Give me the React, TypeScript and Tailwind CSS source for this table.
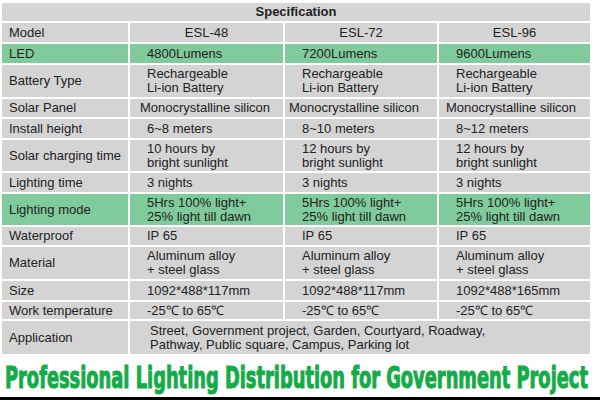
import React from "react";

type Row = {
  label: string;
  values: string[][];
  h: number;
  green?: boolean;
  pads?: number[];
};

const rows: Row[] = [
  { label: "LED", values: [["4800Lumens"], ["7200Lumens"], ["9600Lumens"]], h: 19, green: true },
  {
    label: "Battery Type",
    values: [
      ["Rechargeable", "Li-ion Battery"],
      ["Rechargeable", "Li-ion Battery"],
      ["Rechargeable", "Li-ion Battery"],
    ],
    h: 32,
  },
  {
    label: "Solar Panel",
    values: [["Monocrystalline silicon"], ["Monocrystalline silicon"], ["Monocrystalline silicon"]],
    h: 18,
    pads: [10, 4, 7],
  },
  { label: "Install height", values: [["6~8 meters"], ["8~10 meters"], ["8~12 meters"]], h: 19 },
  {
    label: "Solar charging time",
    values: [
      ["10 hours by", "bright sunlight"],
      ["12 hours by", "bright sunlight"],
      ["12 hours by", "bright sunlight"],
    ],
    h: 31,
  },
  { label: "Lighting time", values: [["3 nights"], ["3 nights"], ["3 nights"]], h: 19 },
  {
    label: "Lighting mode",
    values: [
      ["5Hrs 100% light+", "25% light till dawn"],
      ["5Hrs 100% light+", "25% light till dawn"],
      ["5Hrs 100% light+", "25% light till dawn"],
    ],
    h: 31,
    green: true,
  },
  { label: "Waterproof", values: [["IP 65"], ["IP 65"], ["IP 65"]], h: 18 },
  {
    label: "Material",
    values: [
      ["Aluminum alloy", "+ steel glass"],
      ["Aluminum alloy", "+ steel glass"],
      ["Aluminum alloy", "+ steel glass"],
    ],
    h: 32,
  },
  { label: "Size", values: [["1092*488*117mm"], ["1092*488*117mm"], ["1092*488*165mm"]], h: 19 },
  { label: "Work temperature", values: [["-25\u2103 to 65\u2103"], ["-25\u2103 to 65\u2103"], ["-25\u2103 to 65\u2103"]], h: 17 },
];

function Cell({ lines, h, green, pad = 17 }: { lines: string[]; h: number; green?: boolean; pad?: number }) {
  return (
    <div
      className={`flex flex-col justify-center leading-[14px] ${green ? "bg-[#80cb9b]" : "bg-[#d4d4d4]"}`}
      style={{ height: h, paddingLeft: pad }}
    >
      {lines.map((l) => (
        <span key={l}>{l}</span>
      ))}
    </div>
  );
}

export default function App() {
  return (
    <div className="w-[600px] h-[400px] bg-white flex flex-col overflow-hidden font-['Liberation_Sans',Arial,sans-serif] text-[13px] text-[#222]">
      <div className="mt-[3px] ml-[2px] w-[588px] grid grid-cols-[126px_153px_152px_151px] gap-[2px] bg-white">
        <div className="col-span-4 h-[18px] bg-[#d6d6d6] flex items-center justify-center font-bold">
          Specification
        </div>

        <div className="h-[19px] bg-[#d4d4d4] flex items-center pl-[7px]">Model</div>
        <div className="h-[19px] bg-[#d4d4d4] flex items-center justify-center">ESL-48</div>
        <div className="h-[19px] bg-[#d4d4d4] flex items-center justify-center">ESL-72</div>
        <div className="h-[19px] bg-[#d4d4d4] flex items-center justify-center">ESL-96</div>

        {rows.map((r) => (
          <React.Fragment key={r.label}>
            <Cell lines={[r.label]} h={r.h} green={r.green} pad={7} />
            {r.values.map((v, i) => (
              <Cell key={i} lines={v} h={r.h} green={r.green} pad={r.pads ? r.pads[i] : 17} />
            ))}
          </React.Fragment>
        ))}

        <Cell lines={["Application"]} h={33} pad={7} />
        <div className="col-span-3 h-[33px] bg-[#d4d4d4] flex flex-col justify-center pl-[20px] leading-[14px]">
          <span>Street, Government project, Garden, Courtyard, Roadway,</span>
          <span>Pathway, Public square, Campus, Parking lot</span>
        </div>
      </div>

      <div className="flex-1 flex items-center pl-[5px] pt-[4px] overflow-hidden">
        <span className="inline-block origin-left scale-x-[0.661] whitespace-nowrap font-['DejaVu_Sans_Condensed','DejaVu_Sans',sans-serif] font-bold text-[30px] leading-none text-[#15ab48] [-webkit-text-stroke:1.1px_#15ab48]">
          Professional Lighting Distribution for Government Project
        </span>
      </div>

      <div className="h-[3px] bg-black" />
    </div>
  );
}
